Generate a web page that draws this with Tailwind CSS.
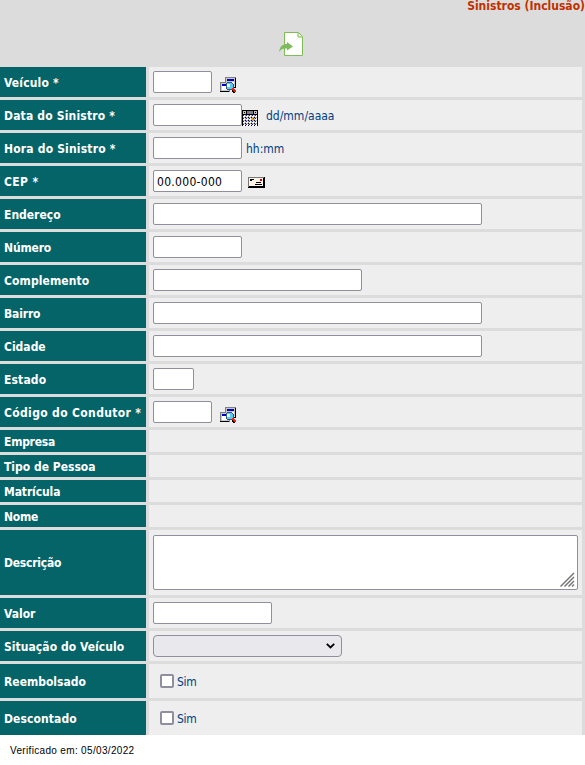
<!DOCTYPE html>
<html lang="pt-BR">
<head>
<meta charset="utf-8">
<title>Sinistros</title>
<script src="https://cdn.jsdelivr.net/npm/@tailwindcss/browser@4"></script>
</head>
<body class="bg-white w-[585px] h-[765px] overflow-hidden font-['DejaVu_Sans_Condensed','DejaVu_Sans',sans-serif] text-[12px] leading-[16px] text-[#004080]">
<svg class="hidden">
  <symbol id="lookup" viewBox="0 0 16 16" shape-rendering="crispEdges">
    <path fill="#808080" d="M5 0h11v9H5zM0 5h10v10H0z"/>
    <path fill="#000" d="M15 1h1v10H9v-1h6zM0 14h9v1H0z"/>
    <path fill="#c8c8c8" d="M6 1h9v8H6zM1 6h8v8H1z"/>
    <path fill="#fff" d="M7 5h7v4H7zM2 9h7v4H2z"/>
    <path fill="#0000c0" d="M7 2h7v2H7zM2 7h4v2H2z"/>
    <path fill="#305878" d="M7 5h5v1h1v1h1v5h-1v1H7v-1H6V6h1z"/>
    <path fill="#60c8f0" d="M7 6h5v1h1v4h-1v1H7z"/>
    <path fill="#d8ffff" d="M7 7h3v3H7z"/>
    <path fill="#000" d="M12 13h1v1h1v1h1v1h-2v-1h-1z"/>
    <path fill="#f02010" d="M12 11h2v1h1v1h1v2h-2v-1h-1v-1h-1z"/>
  </symbol>
</svg>
<div class="bg-[#dcdcdc] h-[735px]">
  <header class="h-[67px]">
    <div class="h-[32px] flex justify-end font-bold text-[#c03000] leading-[13px]"><span class="whitespace-nowrap">Sinistros (Inclusão)</span></div>
    <svg class="ml-[279px] block" width="25" height="24" viewBox="0 0 25 24"><path d="M5.500.5h14l4 4v19h-18z" fill="#fff" stroke="#80bb54"/><path d="M19 1v4h4.500" fill="#e8f4dc" stroke="#80bb54"/><path d="M0 20C1 14 4 12 8 12V10l6 4.500-6 4V16.500C4 16 2 17 0 20z" fill="#7fba5c"/></svg>
  </header>
  <main id="rows" class="grid grid-cols-[146px_433px] gap-[3px]"></main>
</div>
<footer class="pl-[10px] pt-[10px] font-['Liberation_Sans',Arial,sans-serif] text-[10px] leading-[12px] text-black"><span class="tracking-[0.33px]">Verificado em: 05/03/2022</span></footer>
<script>
const field = (w, v = '') => `<input type="text" value="${v}" class="box-border h-[22px] shrink-0 border border-[#8f8f9d] rounded-[2px] bg-white px-[3px] pt-px text-black tracking-[0.3px]" style="width:${w}px">`;
const lookup = '<svg class="ml-[8px] mt-[6px]" width="16" height="16"><use href="#lookup"/></svg>';
let dots = '';
for (let y = 0; y < 4; y++) for (let x = 0; x < 5; x++) dots += `<path fill="#fff" d="M${1 + x * 3} ${5 + y * 3}h2v2h-2z"/><path fill="#2020d0" d="M${1 + x * 3} ${5 + y * 3}h1v1h-1z"/>`;
const calendar = `<svg class="mt-[6px]" width="16" height="16" shape-rendering="crispEdges"><path fill="#000" d="M0 0h16v16H0z"/><path fill="#c0c0c0" d="M1 1h3v3H1zM12 1h3v3h-3z"/><path fill="#808080" d="M5 1h6v3H5z"/><path fill="#000" d="M2 2h1v1H2zM13 2h1v1h-1z"/><path fill="#b0b0b0" d="M1 5h14v10H1z"/>${dots}<path fill="#000" d="M3 7h1v1H3zM6 7h1v1H6zM9 7h1v1H9zM12 7h1v1h-1zM3 10h1v1H3zM6 10h1v1H6zM9 10h1v1H9zM12 10h1v1h-1zM3 13h1v1H3zM6 13h1v1H6zM9 13h1v1H9zM12 13h1v1h-1z"/><path fill="#f0a000" d="M10 8h2v2h-2z"/><path fill="#f00" d="M11 8h1v1h-1z"/></svg>`;
const envelope = '<svg class="ml-[6px] mt-[2px]" width="17" height="11" shape-rendering="crispEdges"><path fill="#000" d="M0 0h17v11H0z"/><path fill="#777" d="M0 0h16v1H0zM0 0h1v10H0z"/><path fill="#fff4e8" d="M1 1h14v8H1z"/><path fill="#000" d="M2 2h4v1H2zM2 3h2v1H2zM8 5h5v1H8zM7 7h7v1H7z"/><path fill="#e00000" d="M12 2h2v2h-2z"/></svg>';
const check = '<input type="checkbox" class="appearance-none ml-[7px] size-[14px] rounded-[2px] border-2 border-[#8f8f9d] bg-white"><span class="ml-[3px] pt-[2px] tracking-[-0.3px]">Sim</span>';
const rows = [
  ['Veículo *', 30, field(59) + lookup, 0.15],
  ['Data do Sinistro *', 30, field(89) + calendar + '<span class="ml-[8px] pt-[2px]">dd/mm/aaaa</span>', 0.18],
  ['Hora do Sinistro *', 30, field(89) + '<span class="ml-[4px] pt-[2px]">hh:mm</span>', 0.18],
  ['CEP *', 30, field(89, '00.000-000') + envelope, 0.4],
  ['Endereço', 30, field(329), 0],
  ['Número', 30, field(89), -0.15],
  ['Complemento', 30, field(209), 0.1],
  ['Bairro', 30, field(329), -0.15],
  ['Cidade', 30, field(329), 0],
  ['Estado', 30, field(41), 0.15],
  ['Código do Condutor *', 30, field(59) + lookup, 0.35],
  ['Empresa', 22, '', -0.25], ['Tipo de Pessoa', 22, '', 0], ['Matrícula', 22, '', -0.1], ['Nome', 22, '', -0.2],
  ['Descrição', 65, '<div class="w-[425px] h-[55px] border border-[#8f8f9d] rounded-[2px] bg-white flex items-end justify-end p-[2px]"><svg width="15" height="15" stroke="#777" stroke-width="1.500"><path d="M.5 14.500L14 1M4.500 14.500L14 5M8.500 14.500L14 9M12 14.500L14 12.500"/></svg></div>', -0.22],
  ['Valor', 30, field(119), 0],
  ['Situação do Veículo', 30, '<div class="w-[189px] h-[22px] border border-[#8f8f9d] rounded-[4px] bg-[#e9e9ed] flex items-center justify-end pr-[6px]"><svg width="9" height="6" fill="none" stroke="#000" stroke-width="1.800"><path d="M.8.8l3.700 3.700L8.200.8"/></svg></div>', 0.05],
  ['Reembolsado', 34, check, 0],
  ['Descontado', 34, check, 0.1],
];
document.getElementById('rows').innerHTML = rows.map(([l, h, c, s]) =>
  `<div class="bg-[#056467] text-white font-bold pl-[4px] pt-px flex items-center whitespace-nowrap" style="height:${h}px"><span style="letter-spacing:${s}px">${l}</span></div><div class="bg-[#eeeeee] pl-[4px] flex items-center" style="height:${h}px">${c}</div>`).join('');
</script>
</body>
</html>
